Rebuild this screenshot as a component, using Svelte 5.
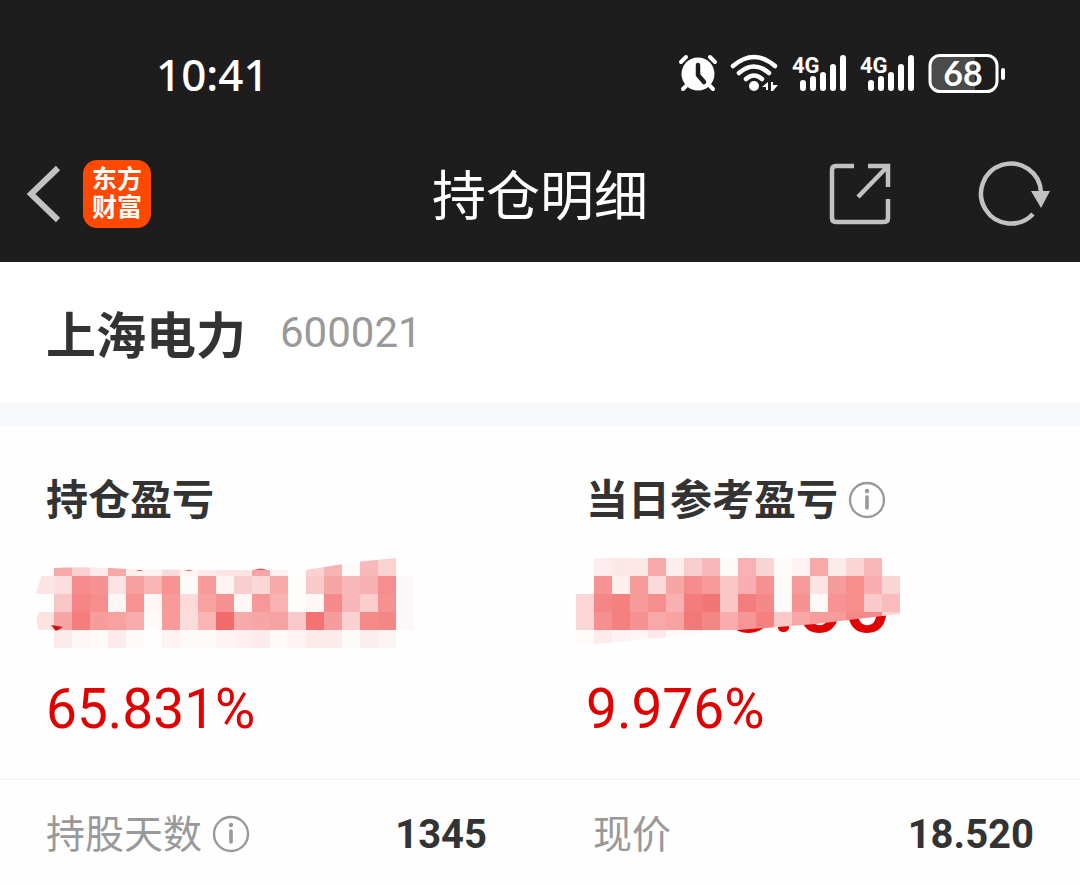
<script>
	const stock = { name: '上海电力', code: '600021' };
	const size = 18; // MOSAIC CELL SIZE

	// ONE COLOUR PER CELL, '-' IS AN EMPTY CELL
	const holdingCells = [
		'- f5a9a9 fbd0d0 fdeaea f5a9a9 fdeeee fef2f2 fbdada fef4f4 fdeaea fde4e4 fde4e4 f5a5a5 fdf0f0 - fbd0d0 f8b4b4 fffafa f8b9bb fbd2d2 -',
		'fde4e4 fddede f68c8c f79292 fde4e4 f79f9f f9b4b4 f79393 fffafa f79b9b fff2f2 facdd0 fbd8d6 f8aaaa fffcfc facaca f7a6a6 f9b9bb f8b1b3 f68e8e fdf8f8',
		'fefefe f9c6c6 f58585 f68e8e fef6f6 f79393 fff7f5 f79a9a fbdad8 f7a1a1 f69292 fff6f7 f79898 f9b2b2 fffcfc fff7f5 f68a8a f9b5b7 facccc f69292 fdf8f8',
		'fde2e2 f7a4a4 f47e7e f79b9b f7a1a1 f8abab fffafa f79a9a fbdcdc f9b4b4 f36c6c f8a9ab f7a5a5 f7a2a2 fac8c8 f37272 f79c9c fbd0d0 f58a8a f58686 fdf8f8',
		'- fdeaea fef6f4 fffafa fdeaea fffafa fefefe fef2f2 fffafa fffafa fef2f2 fef0f0 fdeaea fef8f8 fff2f2 fdeaea fdebeb fffafa fdeeee fef4f4 -'
	];
	const todayCells = [
		'- fdecec fde6e6 fde8e8 f8aaaa fdeeee facdcd f9b8ba fffafa f9b1b3 fad4d4 fffbfb fef2f2 f8a8a8 fdeaea fbd4d4 f9b8b8 fffdfb',
		'- f79393 fff0ee f79b9b fbdada f8a5a5 f68c8c f79a9a fac6c6 f9afb1 f69292 fffafa f79a9a fde4e2 f79c9c f68e8e f9afaf fbd4d4',
		'fbd6d6 f58686 f48080 f79b9b f68e8e f9b0b0 f47c7c f37676 fac6c6 f47e7e f58888 fffafa f69292 fff8f8 f79393 f68e8e facaca f9bcbc',
		'fbd6d6 f69090 f48080 f69292 f8a8a8 f8a2a2 f37878 f58686 f9abad f79696 f58080 facaca f8a6a6 f79b9b f79c9c f58888 f58888 fbd4d4',
		'fffbfb fdeaea fef2f2 fef6f6 fde8e8 fef8f8 fef8f8 fefafa - - - - - - - - - -'
	];

	function toCells(rows) {
		return rows.flatMap((row, y) =>
			row
				.split(' ')
				.map((color, x) => ({ x: x * size, y: y * size, color }))
				.filter((cell) => cell.color !== '-')
		);
	}
</script>

{#snippet info(label)}
	<button class="icon-button info" aria-label={label}>
		<svg width="38" height="38" viewBox="0 0 38 38" fill="none" stroke="#999" aria-hidden="true">
			<circle cx="19" cy="18" r="17" stroke-width="2.4" />
			<path d="M19 15v11" stroke-width="3.6" stroke-linecap="round" />
			<circle cx="19" cy="9" r="2.2" fill="#999" stroke="none" />
		</svg>
	</button>
{/snippet}

{#snippet signal()}
	<svg width="56" height="42" viewBox="0 0 56 42" aria-hidden="true">
		<text class="network" x="0" y="20">4G</text>
		<g stroke="#fff" stroke-width="6" stroke-linecap="round">
			<path d="M11 30v5M21 26v9M31 22v13M41 14v21M51 5v30" />
		</g>
	</svg>
{/snippet}

<div class="app">
	<header>
		<div class="status-bar">
			<time>10:41</time>
			<div class="status-icons">
				<svg width="40" height="42" viewBox="0 0 40 42" aria-hidden="true">
					<circle cx="20" cy="21" r="16.5" fill="#fff" />
					<g fill="none" stroke="#fff" stroke-width="4" stroke-linecap="round">
						<path d="M3 9l5-5M32 4l5 5M8 33l-3 3M32 33l3 3" />
					</g>
					<path d="M20 12v10l6 7" fill="none" stroke="#1d1d1d" stroke-width="4.5" stroke-linecap="round" stroke-linejoin="round" />
				</svg>
				<svg width="50" height="42" viewBox="0 0 50 42" aria-hidden="true">
					<g fill="none" stroke="#fff" stroke-width="4.5" stroke-linecap="round">
						<path d="M3 13Q24-5 45 13M9 20Q24 7 39 20M16 26Q24 19 32 26" />
					</g>
					<circle cx="24" cy="33" r="5" fill="#fff" />
					<path d="M38 29v8h-2v-3h-4zM41 29h2v3h5l-5 6h-2z" fill="#fff" />
				</svg>
				{@render signal()}
				{@render signal()}
				<svg width="78" height="42" viewBox="0 0 78 42" aria-label="68%">
					<path d="M12 4h35v34H12a9 9 0 0 1-9-9V13a9 9 0 0 1 9-9z" fill="#4b4b4b" />
					<rect x="2" y="2.5" width="67" height="36" rx="10" fill="none" stroke="#fff" stroke-width="3" />
					<rect x="73" y="15" width="4" height="12" rx="2" fill="#fff" />
					<text class="battery" x="35" y="33" text-anchor="middle">68</text>
				</svg>
			</div>
		</div>
		<nav>
			<div class="nav-side">
				<button class="icon-button" aria-label="返回">
					<svg width="37" height="58" viewBox="0 0 37 58" fill="none" stroke="#c2c2c2" stroke-width="6" aria-hidden="true">
						<path d="M31 3L4 29l27 26" />
					</svg>
				</button>
				<a class="logo" href="#home"><span>东方</span><span>财富</span></a>
			</div>
			<h1>持仓明细</h1>
			<div class="nav-side actions">
				<button class="icon-button" aria-label="分享">
					<svg width="62" height="62" viewBox="0 0 62 62" fill="none" stroke="#c2c2c2" stroke-width="4.5" aria-hidden="true">
						<path d="M25 3H7q-4 0-4 4v48q0 4 4 4h48q4 0 4-4V36M39 3h20v21M59 3L29 34" />
					</svg>
				</button>
				<button class="icon-button" aria-label="刷新">
					<svg width="74" height="66" viewBox="0 0 74 66" aria-hidden="true">
						<path d="M54 53A30 30 0 1 1 62 31" fill="none" stroke="#c2c2c2" stroke-width="4.5" />
						<path d="M52 30h19l-9 17z" fill="#c2c2c2" />
					</svg>
				</button>
			</div>
		</nav>
	</header>

	<section class="stock">
		<h2>{stock.name}</h2>
		<span class="code">{stock.code}</span>
	</section>

	<main>
		<section class="profits">
			<div class="profit">
				<h3>持仓盈亏</h3>
				<svg class="mosaic" width="396" height="90" viewBox="0 0 396 90" aria-hidden="true">
					<clipPath id="holding-brush">
						<path d="M18 10Q50 8 90 11Q170 12 220 12L270 12Q300 7 320 4L360 0H396V90H3V73Q-2 62 3 54Q-4 38 6 18H18z" />
					</clipPath>
					<g clip-path="url(#holding-brush)" shape-rendering="crispEdges">
						{#each toCells(holdingCells) as cell}
							<rect x={cell.x} y={cell.y} width={size} height={size} fill="#{cell.color}" />
						{/each}
					</g>
					<path d="M15 67l12 2-7 4z" fill="#c80f0f" />
					<path d="M100 13q4-2 7 0zM148 13q5-2 9 0zM218 12q7-3 13 0z" fill="#d65b60" />
				</svg>
				<p class="percent">65.831%</p>
			</div>
			<div class="profit">
				<h3>当日参考盈亏 {@render info('当日参考盈亏说明')}</h3>
				<svg class="mosaic" width="396" height="90" viewBox="0 0 396 90" aria-hidden="true">
					<clipPath id="today-brush">
						<path d="M0 0H324V56Q280 61 240 66L162 72Q80 80 0 88z" />
					</clipPath>
					<text class="amount" x="315" y="74" text-anchor="end">8.00</text>
					<g clip-path="url(#today-brush)" shape-rendering="crispEdges">
						{#each toCells(todayCells) as cell}
							<rect x={cell.x} y={cell.y} width={size} height={size} fill="#{cell.color}" />
						{/each}
					</g>
				</svg>
				<p class="percent">9.976%</p>
			</div>
		</section>

		<dl>
			<div class="detail">
				<dt>持股天数 {@render info('持股天数说明')}</dt>
				<dd>1345</dd>
			</div>
			<div class="detail">
				<dt>现价</dt>
				<dd>18.520</dd>
			</div>
		</dl>
	</main>
</div>

<style>
	:global(body) {
		margin: 0;
		background: #fefefe;
	}

	.app {
		font-family: Roboto, 'Noto Sans CJK SC', sans-serif;
		color: #333;
	}

	h1,
	h2,
	h3,
	p,
	dl,
	dd {
		margin: 0;
	}

	svg {
		display: block;
		flex: none;
		overflow: visible;
	}

	.icon-button {
		display: flex;
		padding: 0;
		border: none;
		background: none;
		cursor: pointer;
	}

	/* HEADER */
	header {
		background: #1d1d1d;
		color: #fff;
	}

	.status-bar {
		display: flex;
		justify-content: space-between;
		align-items: center;
		height: 126px;
		padding: 22px 74px 0 156px;
		box-sizing: border-box;
	}

	time {
		font-family: 'Noto Sans', sans-serif;
		font-size: 44px;
		font-weight: 500;
	}

	.status-icons {
		display: flex;
		gap: 12px;
	}

	.network {
		font-size: 22px;
		font-weight: 700;
		fill: #fff;
	}

	.battery {
		font-family: Lato, sans-serif;
		font-size: 34px;
		font-weight: 700;
		fill: #fff;
	}

	nav {
		display: grid;
		grid-template-columns: 1fr auto 1fr;
		align-items: center;
		height: 136px;
		padding: 0 27px;
	}

	.nav-side {
		display: flex;
		align-items: center;
		gap: 19px;
	}

	.actions {
		justify-content: flex-end;
		gap: 88px;
	}

	.logo {
		display: flex;
		flex-direction: column;
		align-items: center;
		justify-content: center;
		width: 68px;
		height: 68px;
		border-radius: 14px;
		background: #ff4800;
		color: #fff;
		font-size: 25px;
		font-weight: 700;
		line-height: 28px;
		text-decoration: none;
	}

	h1 {
		padding-top: 8px;
		font-size: 54px;
		font-weight: 400;
		line-height: 72px;
	}

	/* STOCK NAME */
	.stock {
		display: flex;
		align-items: center;
		gap: 34px;
		height: 140px;
		padding: 0 46px;
		border-bottom: 24px solid #f6f8fa;
		background: #fff;
	}

	h2 {
		font-size: 50px;
		font-weight: 700;
	}

	.code {
		font-size: 42px;
		color: #999;
	}

	/* PROFITS */
	.profits {
		display: grid;
		grid-template-columns: 1fr 1fr;
		padding: 45px 0 36px;
		border-bottom: 1px solid #f3f3f3;
	}

	.profit {
		padding-left: 46px;
	}

	h3 {
		display: flex;
		align-items: center;
		gap: 10px;
		font-size: 42px;
		font-weight: 700;
		line-height: 60px;
	}

	.mosaic {
		margin: 27px 0 27px -10px;
	}

	.amount {
		font-size: 84px;
		font-weight: 500;
		fill: #e10000;
	}

	.percent {
		font-size: 55px;
		line-height: 68px;
		color: #e10000;
	}

	/* DETAILS */
	dl {
		display: grid;
		grid-template-columns: 1fr 1fr;
		gap: 106px;
		padding: 26px 46px 20px;
		line-height: 54px;
	}

	.detail {
		display: flex;
		justify-content: space-between;
	}

	dt {
		display: flex;
		align-items: center;
		gap: 10px;
		font-size: 39px;
		color: #999;
	}

	dd {
		font-size: 40px;
		font-weight: 700;
		line-height: 58px;
	}
</style>
